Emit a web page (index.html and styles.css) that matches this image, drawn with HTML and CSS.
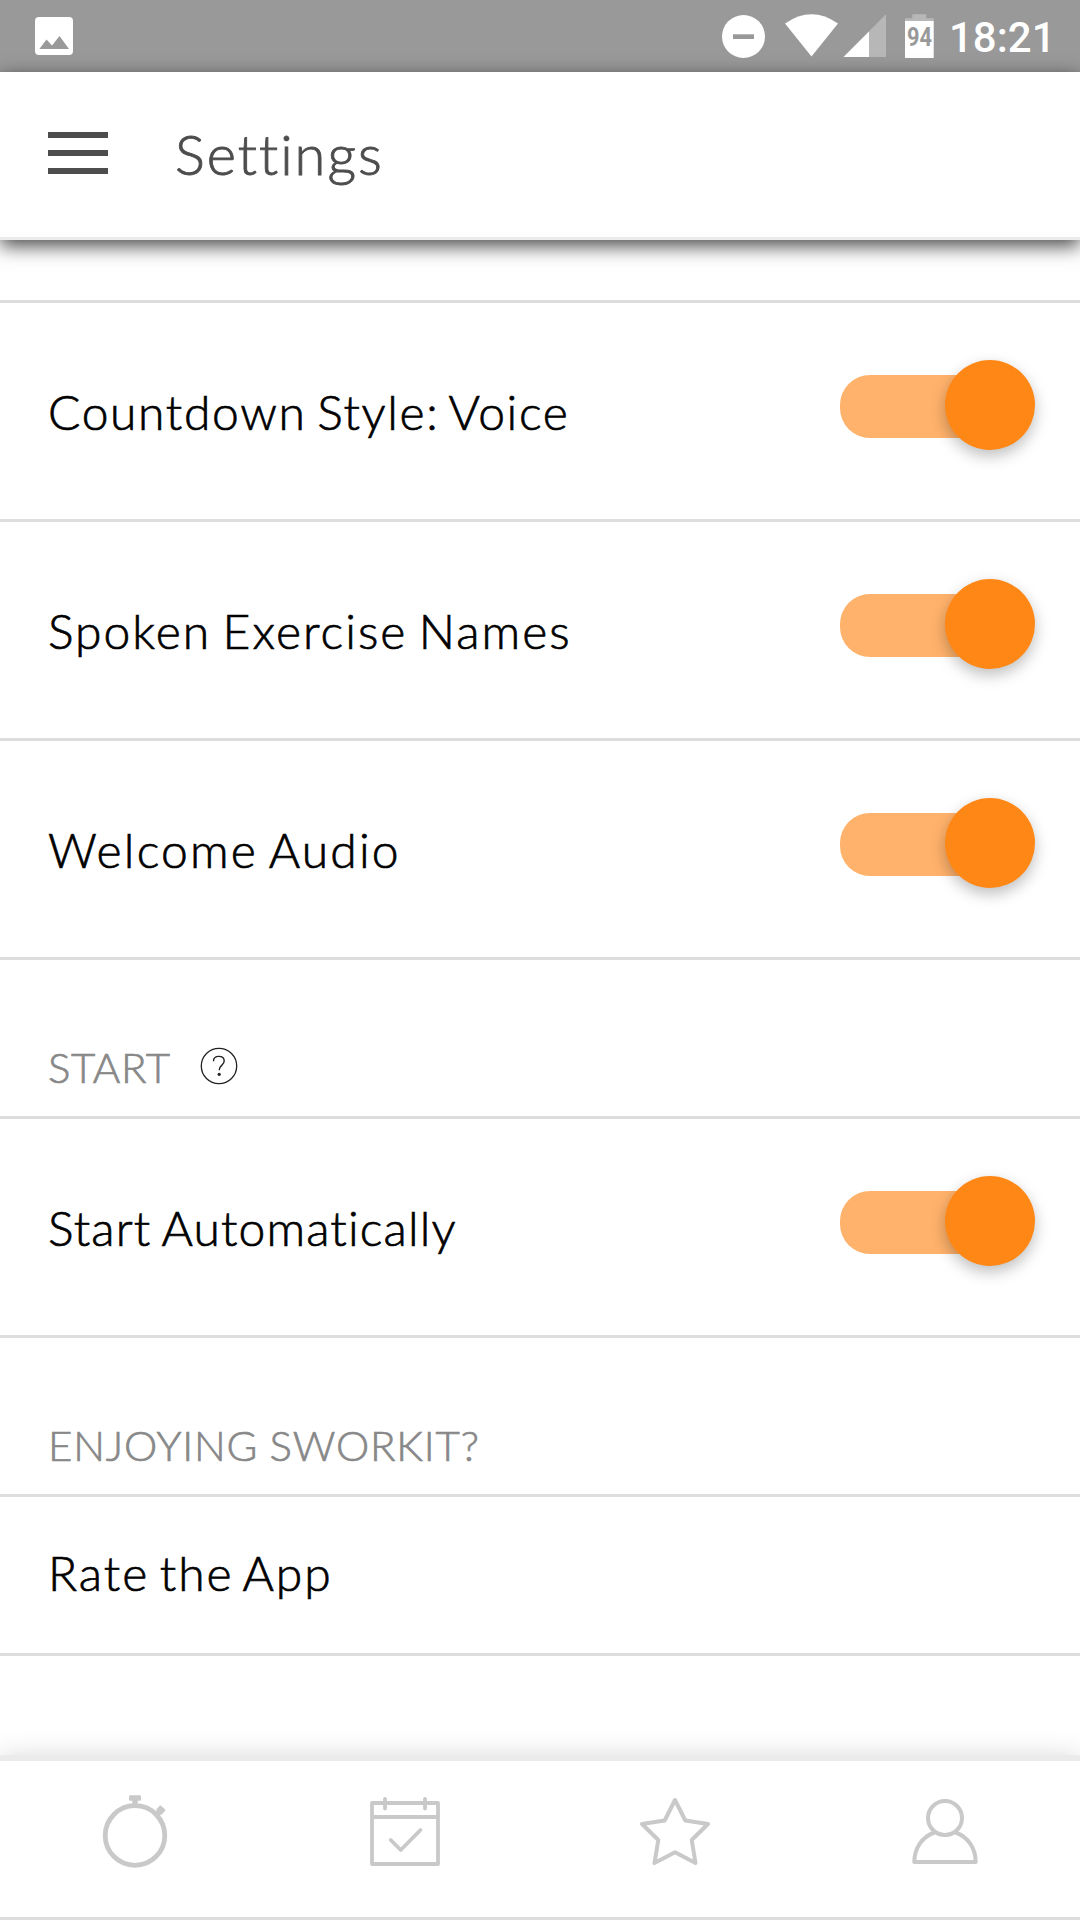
FILE: index.html
```html
<!DOCTYPE html>
<html lang="en">
<head>
<meta charset="utf-8">
<title>Settings</title>
<link rel="stylesheet" href="styles.css">
</head>
<body>
<div class="app">
  <div class="status-bar">
    <svg class="status-photo" width="38" height="38" viewBox="0 0 38 38"><rect width="38" height="38" rx="4" fill="#fff"/><path d="M4.3 32L11.5 22.500L17 28.500L24.500 19L34 32Z" fill="#999"/></svg>
    <div class="status-right">
      <svg class="status-icons" width="220" height="46" viewBox="714 8 220 46">
        <circle cx="743.500" cy="36.500" r="21.500" fill="#fff"/>
        <rect x="733" y="34.300" width="21" height="4.700" fill="#999"/>
        <path d="M785 23.500Q811.500 5 838 23.500L811.500 56.500Z" fill="#fff"/>
        <path d="M843.500 57L886 14.300V57Z" fill="#b7b7b7"/>
        <path d="M843.500 57L869 31.500V57Z" fill="#fff"/>
        <path d="M912.300 14.300H926.300V18.300H933.700V21H905V18.300H912.300Z" fill="#b7b7b7"/>
        <rect x="905" y="21" width="28.700" height="37" fill="#fff"/>
        <text class="battery-level" x="919.500" y="45.500" text-anchor="middle" textLength="25" lengthAdjust="spacingAndGlyphs">94</text>
      </svg>
      <span class="clock">18:21</span>
    </div>
  </div>
  <header class="header">
    <div class="menu"><i></i><i></i><i></i></div>
    <h1 class="title">Settings</h1>
  </header>
  <main class="list">
    <div class="spacer"></div>
    <div class="row"><span class="label label-countdown">Countdown Style: Voice</span><span class="toggle"><span class="knob"></span></span></div>
    <div class="row"><span class="label label-spoken">Spoken Exercise Names</span><span class="toggle"><span class="knob"></span></span></div>
    <div class="row"><span class="label label-welcome">Welcome Audio</span><span class="toggle"><span class="knob"></span></span></div>
    <div class="section"><span class="section-title section-start">START</span>
      <svg class="help" width="38" height="38" viewBox="0 0 38 38" fill="none" stroke="#222"><circle cx="19" cy="19" r="17.700" stroke-width="1.300"/><path d="M13.500 14.200C13.500 11 15.800 9.400 18.800 9.400C21.900 9.400 24.200 11.200 24.200 14.100C24.200 18.300 19.200 18 19.200 23.200" stroke-width="1.400"/><circle cx="19.200" cy="27.300" r="1.600" fill="#222" stroke="none"/></svg>
    </div>
    <div class="row"><span class="label label-auto">Start Automatically</span><span class="toggle"><span class="knob"></span></span></div>
    <div class="section"><span class="section-title section-enjoying">ENJOYING SWORKIT?</span></div>
    <div class="row row-short"><span class="label label-rate">Rate the App</span></div>
  </main>
  <nav class="tabs">
    <div class="tab"><svg width="80" height="80" viewBox="95 1790 80 80" fill="none" stroke="#c9c9c9"><circle cx="135" cy="1835.500" r="29.800" stroke-width="4.800"/><path d="M135 1800V1805M156.500 1815L160.500 1811" stroke-width="5.500"/><rect x="129" y="1795.200" width="12" height="5.600" rx="1.200" fill="#c9c9c9" stroke="none"/><rect x="157.500" y="1806.300" width="6.600" height="7.400" rx="1" transform="rotate(-48 160.800 1810)" fill="#c9c9c9" stroke="none"/></svg></div>
    <div class="tab"><svg width="80" height="80" viewBox="365 1790 80 80" fill="none" stroke="#c9c9c9" stroke-width="3.800" stroke-linecap="round" stroke-linejoin="round"><path d="M372 1803H438V1864H372ZM372 1817H438M385 1799V1808.500M425 1799V1808.500M390.700 1840L400.700 1850L420.500 1830"/></svg></div>
    <div class="tab"><svg width="80" height="80" viewBox="635 1790 80 80" fill="none" stroke="#c9c9c9" stroke-width="4" stroke-linejoin="round"><path d="M675 1800L685.300 1820.500L708 1824L691.700 1840L695.500 1863L675 1852.300L654.500 1863L658.300 1840L642 1824L664.700 1820.500Z"/></svg></div>
    <div class="tab"><svg width="80" height="80" viewBox="905 1790 80 80" fill="none" stroke="#c9c9c9" stroke-width="4" stroke-linejoin="round"><circle cx="945" cy="1818" r="17"/><path d="M934.500 1832.500C922 1837 914.500 1848 914.300 1862H975.700C975.500 1848 968 1837 955.500 1832.500"/></svg></div>
  </nav>
</div>
</body>
</html>
```
FILE: styles.css
```css
* { box-sizing: border-box; }

body {
  margin: 0;
  background: #fff;
  font-family: Lato, "Open Sans", sans-serif;
  font-weight: 300;
  font-variant-ligatures: none;
}

svg { display: block; flex: none; }

.app {
  width: 1080px;
  height: 1920px;
  display: flex;
  flex-direction: column;
  overflow: hidden;
}

.status-bar {
  height: 72px;
  flex: none;
  display: flex;
  justify-content: space-between;
  padding: 0 29px 0 35px;
  background: #999;
}

.status-photo { margin-top: 17px; }
.status-right { display: flex; }
.status-icons { margin-top: 8px; overflow: visible; }
.battery-level { font: 700 26px Roboto, sans-serif; fill: #999; }

.clock {
  margin-left: 15px;
  width: 102px;
  font: 500 42px/75px Roboto, sans-serif;
  color: #fff;
  white-space: nowrap;
}

.header {
  height: 168px;
  flex: none;
  display: flex;
  align-items: flex-start;
  position: relative;
  z-index: 1;
  padding-left: 48px;
  background: #fff;
  border-bottom: 3px solid #ebebeb;
  box-shadow: 0 6px 18px rgba(0, 0, 0, .72);
}

.menu {
  width: 60px;
  margin-top: 60px;
  display: flex;
  flex-direction: column;
  gap: 12px;
}
.menu i { height: 6px; background: #4d4d4d; }

.title {
  margin: 48px 0 0 67px;
  font-size: 56px;
  font-weight: 300;
  line-height: 68px;
  letter-spacing: 2px;
  color: #4d4d4d;
  -webkit-text-stroke: .9px #4d4d4d;
}

.list { flex: 1; min-height: 0; }
.spacer { height: 63px; border-bottom: 3px solid #ddd; }

.row {
  height: 219px;
  display: flex;
  justify-content: space-between;
  align-items: flex-start;
  padding: 57px 45px 0 48px;
  border-bottom: 3px solid #ddd;
}

.row-short { height: 159px; padding-top: 24px; }

.label {
  margin-top: 22px;
  font-size: 48px;
  line-height: 60px;
  color: #000;
  white-space: nowrap;
  -webkit-text-stroke: .7px #000;
}
.label-countdown { letter-spacing: 1.65px; word-spacing: -4px; }
.label-spoken { letter-spacing: 2px; word-spacing: -3.5px; }
.label-welcome { letter-spacing: 2.2px; word-spacing: -3px; }
.label-auto { letter-spacing: 1.15px; word-spacing: -2.5px; }
.label-rate { letter-spacing: 2px; word-spacing: -4.5px; }

.toggle {
  width: 195px;
  height: 90px;
  display: flex;
  justify-content: flex-end;
  position: relative;
}
.toggle::before {
  content: "";
  position: absolute;
  left: 0;
  top: 15px;
  width: 156px;
  height: 63px;
  border-radius: 30px;
  background: #ffb26b;
}
.knob {
  position: relative;
  width: 90px;
  height: 90px;
  border-radius: 50%;
  background: #ff8716;
  box-shadow: 0 6px 15px rgba(0, 0, 0, .26);
}

.section {
  height: 159px;
  display: flex;
  align-items: flex-start;
  padding: 81px 48px 0;
  border-bottom: 3px solid #ddd;
}
.section-title {
  font-size: 42px;
  line-height: 52px;
  color: #888;
  white-space: nowrap;
  -webkit-text-stroke: .7px #888;
}
.section-start { width: 152px; letter-spacing: .5px; }
.section-enjoying { letter-spacing: .8px; word-spacing: -1px; }
.help { margin-top: 6px; }

.tabs {
  height: 165px;
  flex: none;
  display: grid;
  grid-template-columns: repeat(4, 1fr);
  justify-items: center;
  padding-top: 29px;
  position: relative;
  background: #fff;
  border-top: 6px solid #ebebeb;
  border-bottom: 3px solid #ddd;
  box-shadow: 0 0 24px rgba(0, 0, 0, .14);
}
```
